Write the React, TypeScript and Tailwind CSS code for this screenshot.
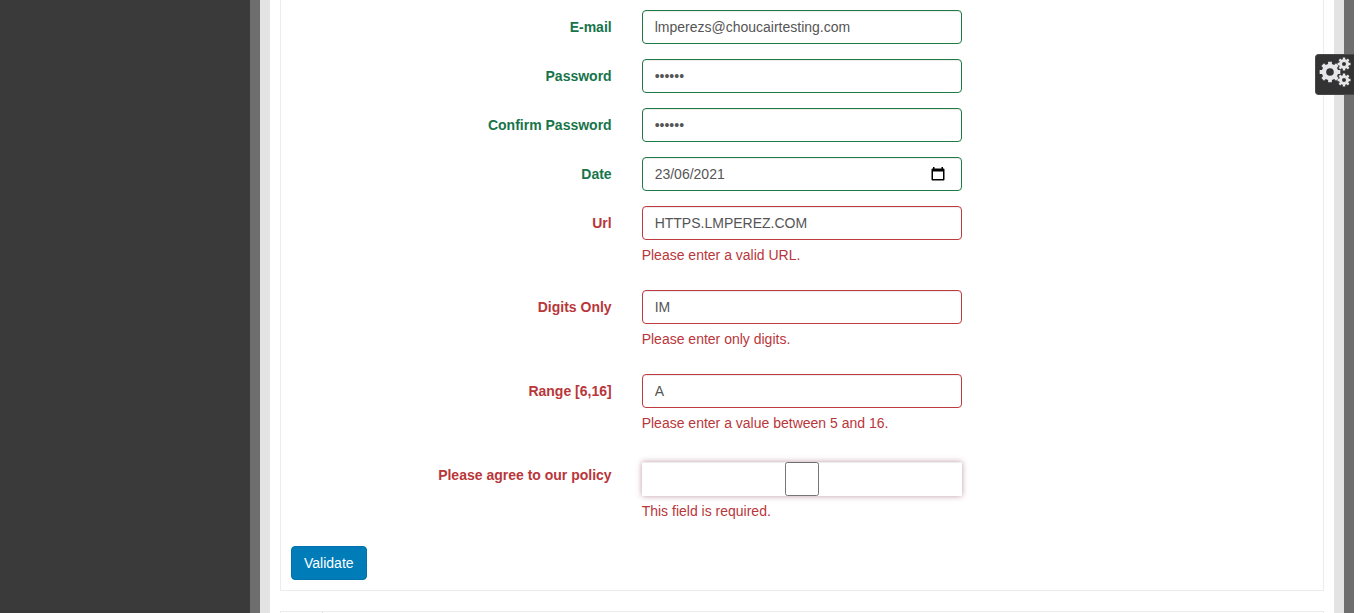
import type { ReactNode } from "react";

type Status = "valid" | "invalid";

type RowProps = {
  id: string;
  label: string;
  status: Status;
  error?: string;
  children: ReactNode;
};

const labelTone = { valid: "text-[#17744a]", invalid: "text-[#b9363a]" };
const borderTone = { valid: "border-[#1f7a45]", invalid: "border-[#bd3a3e]" };

function Row({ id, label, status, error, children }: RowProps) {
  return (
    <div className="-mx-[15px] mb-[15px] grid grid-cols-3">
      <label htmlFor={id} className={`px-[15px] pt-[7px] text-right font-bold ${labelTone[status]}`}>
        {label}
      </label>
      <div className="px-[15px]">
        {children}
        {error && (
          <span id={`${id}-error`} className="mt-[5px] mb-2.5 block text-[#b9363a]">
            {error}
          </span>
        )}
      </div>
    </div>
  );
}

type FieldProps = {
  id: string;
  label: string;
  type: string;
  value: string;
  status: Status;
  error?: string;
};

function Field({ id, label, type, value, status, error }: FieldProps) {
  return (
    <Row id={id} label={label} status={status} error={error}>
      <input
        id={id}
        type={type}
        defaultValue={value}
        className={`block h-[34px] w-full rounded border bg-white px-3 py-1.5 text-[#555] shadow-[inset_0_1px_1px_rgba(0,0,0,0.075)] outline-none ${borderTone[status]}`}
      />
    </Row>
  );
}

function DateField() {
  return (
    <Row id="date" label="Date" status="valid">
      <div className="flex h-[34px] items-center rounded border border-[#1f7a45] bg-white pr-4 pl-3 shadow-[inset_0_1px_1px_rgba(0,0,0,0.075)]">
        <input id="date" type="text" defaultValue="23/06/2021" className="min-w-0 flex-1 text-[#555] outline-none" />
        <button type="button" aria-label="Show date picker">
          <svg className="block h-4 w-4" viewBox="0 0 16 16" aria-hidden="true">
            <path fill="#000" d="M4 1h1.5v1.5h7V1H14v1.5h.5a1 1 0 0 1 1 1v10a1 1 0 0 1-1 1h-11a1 1 0 0 1-1-1v-10a1 1 0 0 1 1-1H4zM4 5.5V13h10V5.5z" />
          </svg>
        </button>
      </div>
    </Row>
  );
}

function gearPath(cx: number, cy: number, outer: number, inner: number, hole: number) {
  const teeth = 8;
  const step = (Math.PI * 2) / teeth;
  const point = (r: number, a: number) => `${(cx + r * Math.cos(a)).toFixed(2)} ${(cy + r * Math.sin(a)).toFixed(2)}`;
  const points: string[] = [];
  for (let i = 0; i < teeth; i++) {
    const a = i * step;
    points.push(point(inner, a - step * 0.3), point(outer, a - step * 0.23), point(outer, a + step * 0.23), point(inner, a + step * 0.3));
  }
  return `M${points.join("L")}ZM${cx - hole} ${cy}a${hole} ${hole} 0 1 0 ${hole * 2} 0a${hole} ${hole} 0 1 0 ${-hole * 2} 0Z`;
}

function Gears() {
  return (
    <svg className="h-8 w-8" viewBox="0 0 32 32" fill="#e6e6ea" fillRule="evenodd" aria-hidden="true">
      <path d={gearPath(11, 16, 10.5, 8.2, 3.8)} />
      <path d={gearPath(25, 8, 6.6, 5, 2)} />
      <path d={gearPath(25, 24, 6.6, 5, 2)} />
    </svg>
  );
}

export default function App() {
  return (
    <div className="min-h-screen bg-white pr-3 font-['Liberation_Sans',Arial,sans-serif] text-[14px] leading-5">
      <div className="flex min-h-screen">
        <aside className="w-[250px] shrink-0 bg-[#3a3a3a]" />
        <div className="flex min-w-0 flex-1 border-x-[10px] border-[#6e6e6e]">
          <main className="min-w-0 flex-1 border-x-[10px] border-[#e3e3e3] px-2.5">
            <form className="border-x border-b border-[#ececec] p-2.5" onSubmit={(e) => e.preventDefault()} noValidate>
              <Field id="email" label="E-mail" type="email" value="lmperezs@choucairtesting.com" status="valid" />
              <Field id="password" label="Password" type="password" value="123456" status="valid" />
              <Field id="confirm" label="Confirm Password" type="password" value="123456" status="valid" />
              <DateField />
              <Field id="url" label="Url" type="url" value="HTTPS.LMPEREZ.COM" status="invalid" error="Please enter a valid URL." />
              <Field id="digits" label="Digits Only" type="text" value="IM" status="invalid" error="Please enter only digits." />
              <Field id="range" label="Range [6,16]" type="text" value="A" status="invalid" error="Please enter a value between 5 and 16." />
              <Row id="policy" label="Please agree to our policy" status="invalid" error="This field is required.">
                <input
                  id="policy"
                  type="checkbox"
                  className="mt-1 block h-[34px] w-full shadow-[inset_0_1px_1px_rgba(0,0,0,0.075),0_0_6px_#c099a8]"
                />
              </Row>
              <button type="submit" className="block h-[34px] rounded border border-[#0071ab] bg-[#007cb9] px-3 text-white">
                Validate
              </button>
            </form>
            <section className="mt-5 h-0.5 overflow-hidden border border-b-0 border-[#ececec]">
              <div className="h-full w-[42px] border-r border-[#ddd]" />
            </section>
          </main>
        </div>
      </div>
      <button
        type="button"
        aria-label="Settings"
        className="fixed top-[54px] right-3 flex h-[41px] w-[39px] items-start justify-center rounded-l border border-r-0 border-[#484848] bg-[#333] pt-px"
      >
        <Gears />
      </button>
    </div>
  );
}
